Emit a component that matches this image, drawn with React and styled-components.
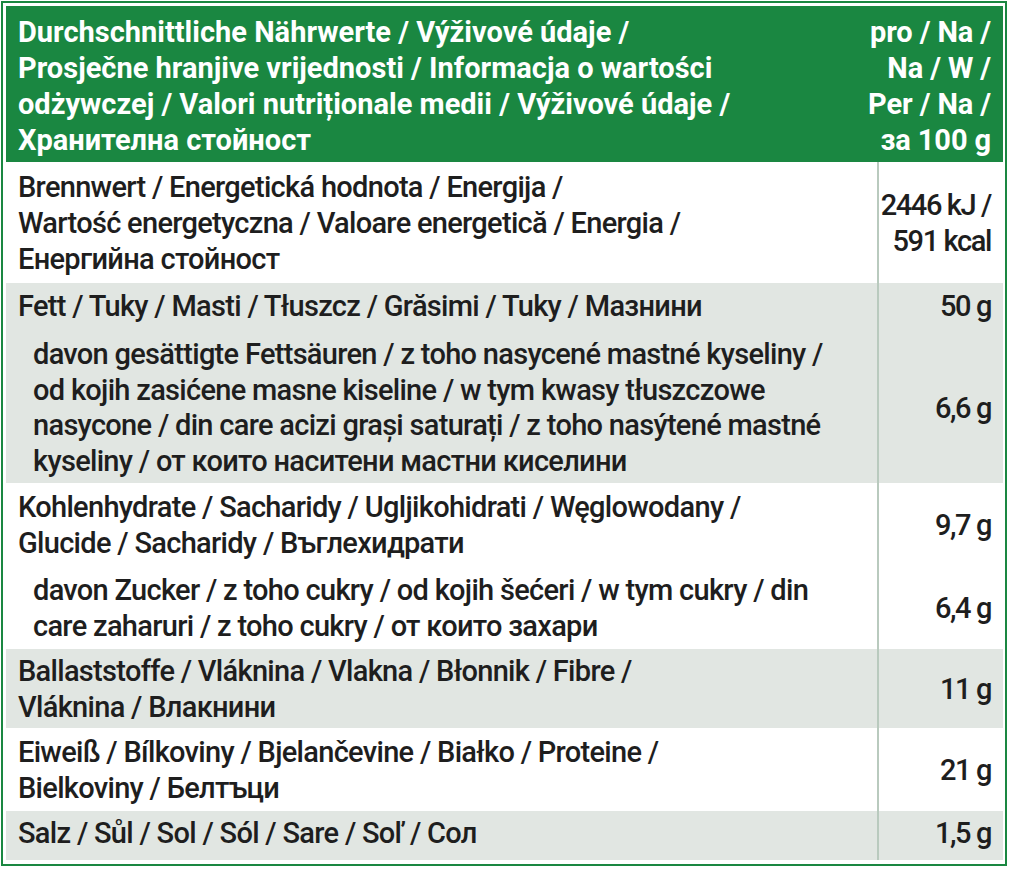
import React from "react"
import styled, { createGlobalStyle } from "styled-components"

const GREEN = "#1a8741"
const SHADE = "#e1e6e2"

const Global = createGlobalStyle`
  html, body {
    margin: 0;
    padding: 0;
    background: #fff;
  }
  body {
    font-family: Roboto, "Liberation Sans", sans-serif;
  }
`

const Frame = styled.div`
  box-sizing: border-box;
  width: 1006px;
  margin: 1px 0 0 1px;
  border: 2px solid ${GREEN};
  padding: 3px 2px 4px 3px;
  background: #fff;
`

const Row = styled.div`
  display: grid;
  grid-template-columns: 1fr 126px;
  background: ${(p) => (p.$shade ? SHADE : "#fff")};
`

const Head = styled(Row)`
  background: ${GREEN};
  color: #fff;
  font-weight: 700;
`

const Label = styled.div`
  padding: ${(p) => p.$pt ?? 6}px 0 ${(p) => p.$pb ?? 6}px ${(p) => (p.$sub ? 27 : 12)}px;
  font-size: 29px;
  line-height: ${(p) => p.$lh ?? 36}px;
  letter-spacing: ${(p) => (p.$head ? "0px" : "-0.7px")};
`

const Line = styled.span`
  display: block;
  white-space: nowrap;
`

const Value = styled.div`
  display: flex;
  flex-direction: column;
  justify-content: ${(p) => (p.$top ? "flex-start" : "center")};
  align-items: flex-end;
  padding: ${(p) => p.$pt ?? 6}px 12px ${(p) => p.$pb ?? 6}px 0;
  border-left: 2px solid ${(p) => (p.$head ? "transparent" : "#b9cabe")};
  font-size: 29px;
  line-height: 36px;
  letter-spacing: ${(p) => (p.$head ? "-0.1px" : "-1.4px")};
  white-space: nowrap;
`

const Body = styled.div`
  color: #1e1e1e;
  font-weight: 500;
`

const rows = [
  {
    lines: [
      "Brennwert / Energetická hodnota / Energija /",
      "Wartość energetyczna / Valoare energetică / Energia /",
      "Енергийна стойност",
    ],
    value: ["2446 kJ /", "591 kcal"],
    pt: 7,
    pb: 6,
  },
  {
    shade: true,
    lines: ["Fett / Tuky / Masti / Tłuszcz / Grăsimi / Tuky / Мазнини"],
    value: ["50 g"],
    pt: 5,
    pb: 8,
  },
  {
    shade: true,
    sub: true,
    lh: 35.5,
    lines: [
      "davon gesättigte Fettsäuren / z toho nasycené mastné kyseliny /",
      "od kojih zasićene masne kiseline / w tym kwasy tłuszczowe",
      "nasycone / din care acizi grași saturați / z toho nasýtené mastné",
      "kyseliny / от които наситени мастни киселини",
    ],
    value: ["6,6 g"],
    pt: 5,
    pb: 4,
  },
  {
    lines: [
      "Kohlenhydrate / Sacharidy / Ugljikohidrati / Węglowodany /",
      "Glucide / Sacharidy / Въглехидрати",
    ],
    value: ["9,7 g"],
    pt: 6,
    pb: 5,
  },
  {
    sub: true,
    lines: [
      "davon Zucker / z toho cukry / od kojih šećeri / w tym cukry / din",
      "care zaharuri / z toho cukry / от които захари",
    ],
    value: ["6,4 g"],
    pt: 6,
    pb: 5,
  },
  {
    shade: true,
    lines: [
      "Ballaststoffe / Vláknina / Vlakna / Błonnik / Fibre /",
      "Vláknina / Влакнини",
    ],
    value: ["11 g"],
    pt: 4,
    pb: 3,
  },
  {
    lines: [
      "Eiweiß / Bílkoviny / Bjelančevine / Białko / Proteine /",
      "Bielkoviny / Белтъци",
    ],
    value: ["21 g"],
    pt: 6,
    pb: 5,
  },
  {
    shade: true,
    lines: ["Salz / Sůl / Sol / Sól / Sare / Soľ / Сол"],
    value: ["1,5 g"],
    pt: 4,
    pb: 9,
  },
]

const App = () => (
  <>
    <Global />
    <Frame>
      <Head>
        <Label $head $pt={8} $pb={4}>
          <Line>Durchschnittliche Nährwerte / Výživové údaje /</Line>
          <Line>Prosječne hranjive vrijednosti / Informacja o wartości</Line>
          <Line>odżywczej / Valori nutriționale medii / Výživové údaje /</Line>
          <Line>Хранителна стойност</Line>
        </Label>
        <Value $head $top $pt={8} $pb={4}>
          <span>pro / Na /</span>
          <span>Na / W /</span>
          <span>Per / Na /</span>
          <span>за 100 g</span>
        </Value>
      </Head>
      <Body>
        {rows.map((r, i) => (
          <Row key={i} $shade={r.shade}>
            <Label $sub={r.sub} $lh={r.lh} $pt={r.pt} $pb={r.pb}>
              {r.lines.map((l) => (
                <Line key={l}>{l}</Line>
              ))}
            </Label>
            <Value $pt={r.pt} $pb={r.pb}>
              {r.value.map((v) => (
                <span key={v}>{v}</span>
              ))}
            </Value>
          </Row>
        ))}
      </Body>
    </Frame>
  </>
)

export default App
